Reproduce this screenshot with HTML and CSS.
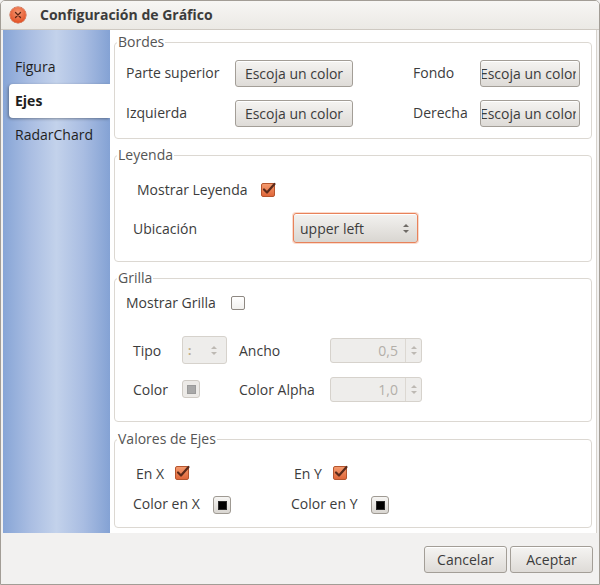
FILE: index.html
```html
<!DOCTYPE html>
<html lang="es">
<head>
<meta charset="utf-8">
<title>Configuración de Gráfico</title>
<link rel="stylesheet" href="styles.css">
</head>
<body>
<div class="window">
  <div class="titlebar">
    <span class="close"><svg width="16" height="16" viewBox="0 0 16 16"><path d="M5.5 5.5l5 5M10.5 5.5l-5 5" stroke="#5a2414" stroke-width="1.3" stroke-linecap="round"/></svg></span>
    <span class="title">Configuración de Gráfico</span>
  </div>
  <div class="main">
    <nav class="sidebar">
      <div class="tab">Figura</div>
      <div class="tab active">Ejes</div>
      <div class="tab">RadarChard</div>
    </nav>
    <div class="panel">
      <fieldset class="group g1">
        <legend>Bordes</legend>
        <div class="grid-bordes">
          <span>Parte superior</span><button class="btn"><span>Escoja un color</span></button><span></span><span>Fondo</span><button class="btn narrow"><span class="clip"><span>Escoja un color</span></span></button>
          <span>Izquierda</span><button class="btn"><span>Escoja un color</span></button><span></span><span>Derecha</span><button class="btn narrow"><span class="clip"><span>Escoja un color</span></span></button>
        </div>
      </fieldset>

      <fieldset class="group g2">
        <legend>Leyenda</legend>
        <div class="row ley1"><span class="lbl-ley">Mostrar Leyenda</span><span class="check on"><svg width="16" height="16" viewBox="0 0 16 16"><path d="M3 7.5l3 3L13.5 2" fill="none" stroke="#5b2a1a" stroke-width="2.2" stroke-linecap="round" stroke-linejoin="round"/></svg></span></div>
        <div class="row ley2"><span class="lbl-ubi">Ubicación</span><span class="combo"><span>upper left</span><span class="arrows"><i class="up"></i><i class="down"></i></span></span></div>
      </fieldset>

      <fieldset class="group g3">
        <legend>Grilla</legend>
        <div class="row gr1"><span class="lbl-gr">Mostrar Grilla</span><span class="check"></span></div>
        <div class="grid-grilla">
          <span>Tipo</span><span class="spin tipo"><span class="dots">:</span><span class="arrows dis"><i class="up"></i><i class="down"></i></span></span><span></span><span>Ancho</span><span class="spin num"><span class="val">0,5</span><span class="arrows dis sep"><i class="up"></i><i class="down"></i></span></span>
          <span>Color</span><span class="colorbtn dis"><i></i></span><span></span><span>Color Alpha</span><span class="spin num"><span class="val">1,0</span><span class="arrows dis sep"><i class="up"></i><i class="down"></i></span></span>
        </div>
      </fieldset>

      <fieldset class="group g4">
        <legend>Valores de Ejes</legend>
        <div class="grid-ejes1">
          <span>En X</span><span class="check on"><svg width="16" height="16" viewBox="0 0 16 16"><path d="M3 7.5l3 3L13.5 2" fill="none" stroke="#5b2a1a" stroke-width="2.2" stroke-linecap="round" stroke-linejoin="round"/></svg></span>
          <span>En Y</span><span class="check on"><svg width="16" height="16" viewBox="0 0 16 16"><path d="M3 7.5l3 3L13.5 2" fill="none" stroke="#5b2a1a" stroke-width="2.2" stroke-linecap="round" stroke-linejoin="round"/></svg></span>
        </div>
        <div class="grid-ejes2">
          <span>Color en X</span><span class="colorbtn"><i></i></span>
          <span>Color en Y</span><span class="colorbtn"><i></i></span>
        </div>
      </fieldset>
    </div>
  </div>
  <div class="footer">
    <button class="btn foot">Cancelar</button>
    <button class="btn foot">Aceptar</button>
  </div>
</div>
</body>
</html>
```
FILE: styles.css
```css
* { box-sizing: border-box; }
html, body { margin: 0; padding: 0; }
body {
  font-family: "Open Sans", "DejaVu Sans", sans-serif;
  font-size: 14px;
  color: #3c3c3c;
  background: #f2f1f0;
}
.window {
  width: 600px;
  height: 585px;
  border: 1px solid #a29d96;
  border-radius: 5px 5px 0 0;
  display: flex;
  flex-direction: column;
  background: #f2f1f0;
  overflow: hidden;
}
.titlebar {
  height: 29px;
  flex: none;
  display: flex;
  align-items: center;
  padding-left: 9px;
  gap: 14px;
  background: linear-gradient(#f7f6f4, #ebe9e5);
  border-bottom: 1px solid #cec9c2;
}
.close {
  width: 16px;
  height: 16px;
  margin-top: -1px;
  border-radius: 50%;
  background: radial-gradient(circle at 50% 35%, #f59a76, #e4572c 70%, #c9441c);
  box-shadow: 0 0 0 0.5px #b8421f;
  display: flex;
}
.title {
  font-weight: bold;
  font-size: 14px;
  color: #3c3c3c;
  margin-top: -2px;
}
.main {
  height: 503px;
  flex: none;
  display: flex;
  padding: 0 2px;
}
.sidebar {
  width: 107px;
  flex: none;
  padding-top: 20px;
  background: linear-gradient(to right, #87a5d6 0%, #a9bde2 25%, #c3d2eb 50%, #a9bde2 75%, #84a2d4 100%);
}
.tab {
  height: 34px;
  margin-left: 6px;
  padding-left: 6px;
  padding-bottom: 1px;
  display: flex;
  align-items: center;
  color: #1e1e1e;
}
.tab.active {
  background: #fff;
  font-weight: bold;
  border-radius: 4px 0 0 4px;
  box-shadow: -1px 1px 3px rgba(0,0,0,0.35);
}
.panel {
  flex: 1;
  background: #fff;
  padding: 4px 4px 0 4px;
  border-right: 1px solid #d8d4ce;
}
.group {
  margin: 0;
  padding: 0;
  min-width: 0;
  border: 1px solid #dcd8d2;
  border-radius: 4px;
}
.group legend {
  margin-left: 2px;
  padding: 0 1px;
  line-height: 16px;
  height: 16px;
  color: #555;
}
.g2, .g3 { margin-top: 8px; }
.g4 { margin-top: 9px; }

.grid-bordes {
  display: grid;
  grid-template-columns: 109px 118px 60px 67px 100px;
  grid-template-rows: 27px 27px;
  row-gap: 13px;
  align-items: center;
  padding: 10px 0 11px 11px;
}
.grid-bordes > span { margin-top: -2px; }
.btn {
  font: inherit;
  color: #3c3c3c;
  height: 27px;
  border: 1px solid #a39e97;
  border-radius: 3px;
  background: linear-gradient(#f5f4f2, #dedbd7);
  box-shadow: inset 0 1px 0 #fff;
  display: flex;
  align-items: center;
  justify-content: center;
  overflow: hidden;
  white-space: nowrap;
  padding: 0 4px 1px;
}
.btn.narrow { padding: 0 3px 1px 1px; }
.btn span { flex: none; }
.btn .clip {
  width: 94px;
  overflow: hidden;
  display: flex;
  justify-content: center;
}

.row { display: flex; align-items: center; }
.ley1 { padding: 20px 0 0 22px; height: 34px; }
.ley2 { padding: 16px 0 18px 18px; height: 64px; }
.lbl-ley { width: 124px; margin-top: -1px; }
.lbl-ubi { width: 160px; }
.lbl-gr { width: 105px; margin-top: -1px; }

.check {
  width: 14px;
  height: 14px;
  border: 1px solid #8e8882;
  border-radius: 2px;
  background: linear-gradient(#fff, #f1f0ee);
  position: relative;
  display: inline-block;
}
.check.on {
  border-color: #b5552e;
  background: linear-gradient(#f49a6e, #e0673a);
}
.check svg {
  position: absolute;
  left: -1px;
  top: -2px;
}

.combo {
  width: 125px;
  height: 30px;
  border: 1px solid #e8825a;
  border-radius: 3px;
  background: linear-gradient(#f3f2f0, #d9d6d1);
  box-shadow: 0 0 0 1px rgba(240,150,110,0.35), inset 0 1px 0 #fff;
  display: flex;
  align-items: center;
  justify-content: space-between;
  padding: 0 8px 0 6px;
  color: #3c3c3c;
}
.arrows {
  display: flex;
  flex-direction: column;
  gap: 3px;
  align-items: center;
}
.arrows i {
  display: block;
  width: 0;
  height: 0;
  border-left: 3px solid transparent;
  border-right: 3px solid transparent;
}
.arrows i.up { border-bottom: 3px solid #6f6b66; }
.arrows i.down { border-top: 3px solid #6f6b66; }
.arrows.dis i.up { border-bottom-color: #bdb9b3; }
.arrows.dis i.down { border-top-color: #bdb9b3; }

.gr1 { padding: 10px 0 0 11px; height: 24px; }
.grid-grilla {
  display: grid;
  grid-template-columns: 49px 45px 12px 91px 92px;
  grid-template-rows: 28px 26px;
  row-gap: 12px;
  align-items: center;
  padding: 26px 0 19px 18px;
}
.spin {
  height: 25px;
  border: 1px solid #d6d2cc;
  border-radius: 3px;
  background: #eeedeb;
  display: flex;
  align-items: center;
  color: #b3afa9;
}
.spin.tipo {
  height: 28px;
  justify-content: space-between;
  padding: 0 9px 0 5px;
}
.dots { color: #bfae8a; font-weight: bold; font-size: 12px; }
.spin.num { justify-content: flex-end; }
.spin .val { padding-right: 7px; }
.arrows.sep {
  height: 100%;
  width: 16px;
  border-left: 1px solid #dcd8d2;
  justify-content: center;
}

.colorbtn {
  width: 18px;
  height: 18px;
  border: 1px solid #9f9a93;
  border-radius: 3px;
  background: linear-gradient(#f6f5f3, #d9d6d1);
  display: flex;
  align-items: center;
  justify-content: center;
}
.colorbtn i {
  width: 9px;
  height: 9px;
  background: #000;
  border: 1px solid #2a2a2a;
  display: block;
}
.colorbtn.dis {
  border-color: #cfcbc5;
  background: #eceae7;
}
.colorbtn.dis i {
  background: #a8a8a8;
  border-color: #9a9a9a;
}

.grid-ejes1 {
  display: grid;
  grid-template-columns: 39px 119px 39px auto;
  grid-template-rows: 14px;
  align-items: center;
  justify-items: start;
  padding: 19px 0 0 21px;
}
.grid-ejes2 {
  display: grid;
  grid-template-columns: 80px 78px 80px auto;
  grid-template-rows: 18px;
  align-items: center;
  justify-items: start;
  padding: 16px 0 13px 18px;
}
.grid-ejes2 > span:not(.colorbtn) { margin-top: -3px; }

.footer {
  flex: 1;
  display: flex;
  justify-content: flex-end;
  align-items: flex-start;
  gap: 3px;
  padding: 13px 6px 0 0;
}
.btn.foot {
  width: 83px;
  padding: 0 0 1px;
}
```
